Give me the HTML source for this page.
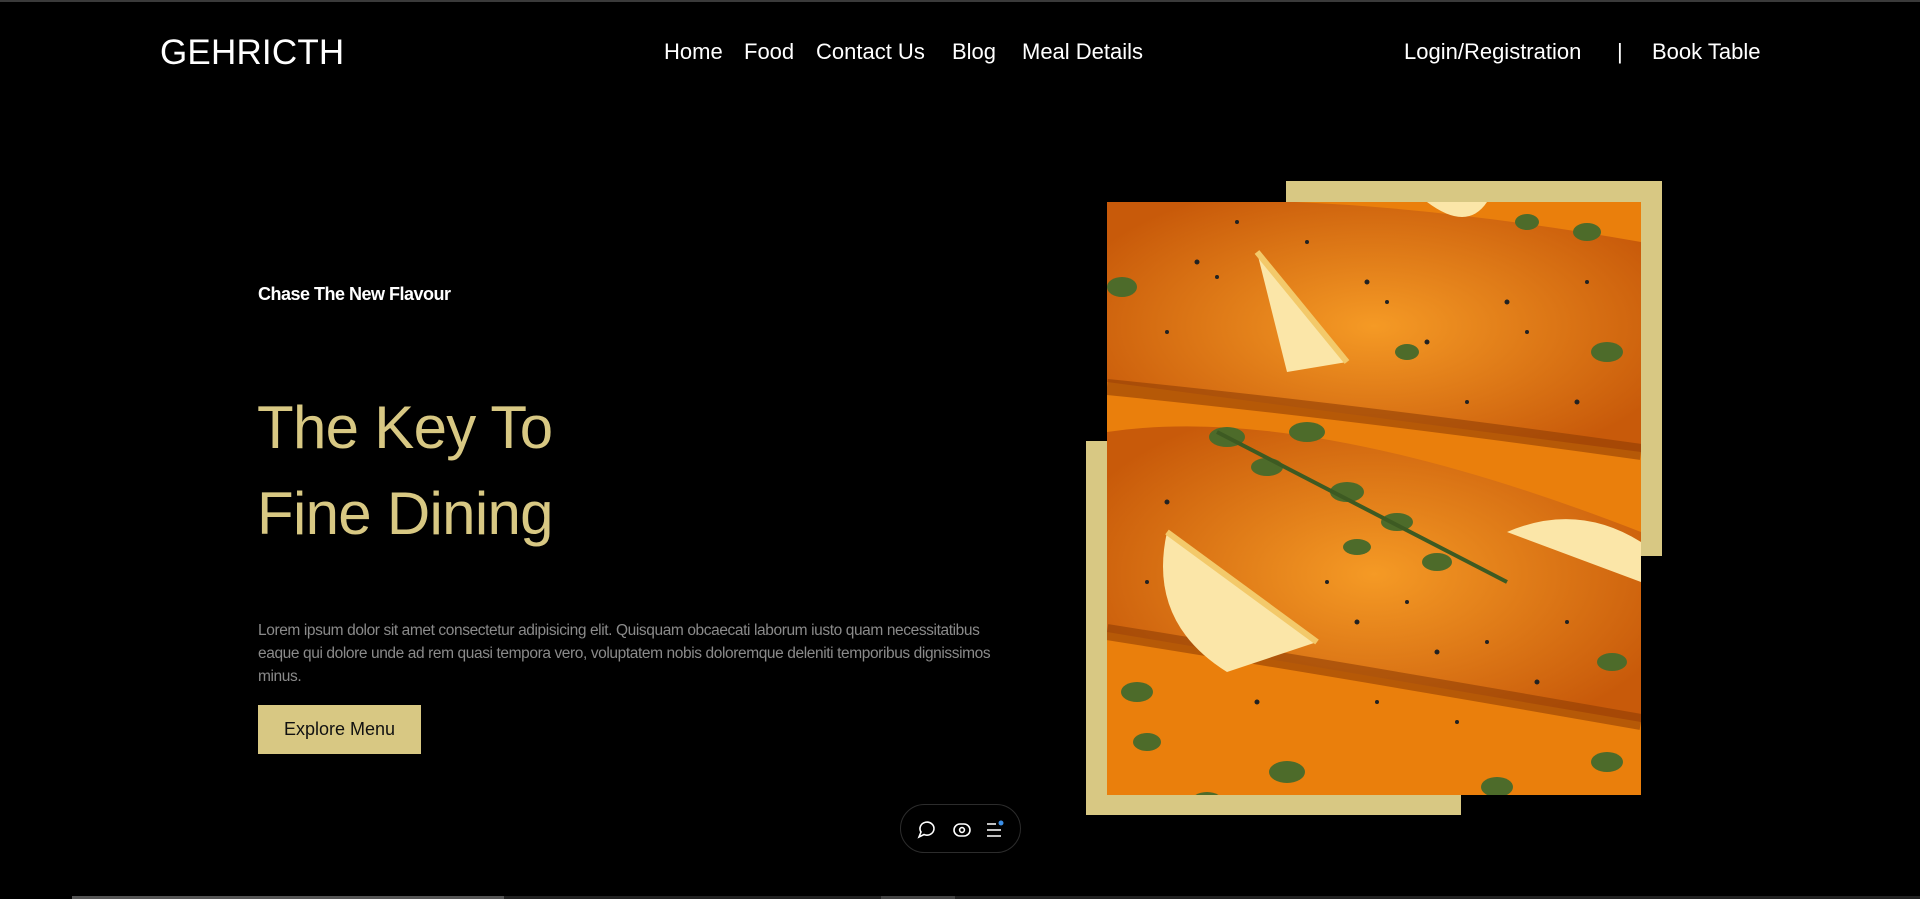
<!DOCTYPE html>
<html><head><meta charset="utf-8">
<style>
*{margin:0;padding:0;box-sizing:border-box}
html,body{width:1920px;height:899px;background:#000;overflow:hidden;font-family:"Liberation Sans",sans-serif;color:#fff}
.top{position:absolute;left:0;top:0;width:1920px;height:2px;background:#3a3a3a}
.logo{position:absolute;left:160px;top:33px;font-size:35px;letter-spacing:0.2px}
.nav{position:absolute;top:39px;font-size:22px;white-space:nowrap}
.nav span{position:absolute;top:0}
.chase{position:absolute;left:258px;top:284px;font-size:18px;font-weight:bold;letter-spacing:-0.5px}
h1{position:absolute;left:257px;top:385px;font-weight:normal;font-size:60px;line-height:86px;color:#d8c883;letter-spacing:-0.7px}
.para{position:absolute;left:258px;top:619px;font-size:15.5px;line-height:23px;color:#8a8a8a;white-space:nowrap;letter-spacing:-0.4px}
.btn{position:absolute;left:258px;top:705px;width:163px;height:49px;background:#d8c883;color:#111;font-size:18px;text-align:center;line-height:49px}
.g1{position:absolute;left:1286px;top:181px;width:376px;height:375px;background:#d8c883}
.g2{position:absolute;left:1086px;top:441px;width:375px;height:374px;background:#d8c883}
.img{position:absolute;left:1107px;top:202px;width:534px;height:593px;overflow:hidden;background:#e8800c}
.pill{position:absolute;left:900px;top:804px;width:121px;height:49px;border:1px solid #2c2c2c;border-radius:25px}
.sb{position:absolute;top:896px;height:3px;background:#444}
</style></head><body>
<div class="top"></div>
<div class="logo">GEHRICTH</div>
<div class="nav">
<span style="left:664px">Home</span>
<span style="left:744px">Food</span>
<span style="left:816px">Contact Us</span>
<span style="left:952px">Blog</span>
<span style="left:1022px">Meal Details</span>
<span style="left:1404px">Login/Registration</span>
<span style="left:1617px">|</span>
<span style="left:1652px">Book Table</span>
</div>
<div class="chase">Chase The New Flavour</div>
<h1>The Key To<br>Fine Dining</h1>
<div class="para">Lorem ipsum dolor sit amet consectetur adipisicing elit. Quisquam obcaecati laborum iusto quam necessitatibus<br>eaque qui dolore unde ad rem quasi tempora vero, voluptatem nobis doloremque deleniti temporibus dignissimos<br>minus.</div>
<div class="btn">Explore Menu</div>
<div class="g1"></div><div class="g2"></div>
<div class="img">
<svg width="534" height="593" viewBox="0 0 534 593">
<defs><radialGradient id="r" cx="50%" cy="50%" r="60%"><stop offset="0" stop-color="#f59a25"/><stop offset="1" stop-color="#c85a0a"/></radialGradient></defs>
<rect width="534" height="593" fill="#ea7f0c"/>
<path d="M40 0 Q250 -10 534 40 L534 250 Q300 220 0 180 L0 0 Z" fill="url(#r)"/>
<path d="M0 230 Q200 200 534 330 L534 520 Q300 480 0 430 Z" fill="url(#r)"/>
<path d="M0 185 Q250 210 534 250" stroke="#8a3a04" stroke-width="16" fill="none" opacity=".55"/>
<path d="M0 430 Q250 470 534 520" stroke="#8a3a04" stroke-width="16" fill="none" opacity=".55"/>
<path d="M150 50 L240 160 L180 170 Z" fill="#fbe6a8"/><path d="M150 50 L240 160" stroke="#f3c96a" stroke-width="6"/>
<path d="M60 330 L210 440 L120 470 Q40 420 60 330 Z" fill="#fbe6a8"/><path d="M60 330 L210 440" stroke="#f3c96a" stroke-width="6"/>
<path d="M400 330 Q470 300 534 340 L534 380 Z" fill="#fbe6a8"/>
<path d="M320 0 Q360 30 380 0 Z" fill="#fbe6a8"/>
<g fill="#4d6b2a">
<ellipse cx="120" cy="235" rx="18" ry="10"/><ellipse cx="160" cy="265" rx="16" ry="9"/><ellipse cx="200" cy="230" rx="18" ry="10"/><ellipse cx="240" cy="290" rx="17" ry="10"/><ellipse cx="290" cy="320" rx="16" ry="9"/><ellipse cx="330" cy="360" rx="15" ry="9"/><ellipse cx="250" cy="345" rx="14" ry="8"/><ellipse cx="500" cy="150" rx="16" ry="10"/><ellipse cx="480" cy="30" rx="14" ry="9"/><ellipse cx="30" cy="490" rx="16" ry="10"/><ellipse cx="180" cy="570" rx="18" ry="11"/><ellipse cx="390" cy="585" rx="16" ry="10"/><ellipse cx="15" cy="85" rx="15" ry="10"/><ellipse cx="505" cy="460" rx="15" ry="9"/><ellipse cx="40" cy="540" rx="14" ry="9"/><ellipse cx="420" cy="20" rx="12" ry="8"/><ellipse cx="300" cy="150" rx="12" ry="8"/><ellipse cx="500" cy="560" rx="16" ry="10"/><ellipse cx="100" cy="600" rx="16" ry="10"/>
</g>
<path d="M110 230 L400 380" stroke="#3d5a22" stroke-width="4"/>
<g fill="#222">
<circle cx="90" cy="60" r="2.5"/><circle cx="110" cy="75" r="2"/><circle cx="260" cy="80" r="2.5"/><circle cx="280" cy="100" r="2"/><circle cx="320" cy="140" r="2.5"/><circle cx="400" cy="100" r="2.5"/><circle cx="420" cy="130" r="2"/><circle cx="60" cy="300" r="2.5"/><circle cx="250" cy="420" r="2.5"/><circle cx="330" cy="450" r="2.5"/><circle cx="430" cy="480" r="2.5"/><circle cx="150" cy="500" r="2.5"/><circle cx="470" cy="200" r="2.5"/><circle cx="360" cy="200" r="2"/><circle cx="60" cy="130" r="2"/><circle cx="220" cy="380" r="2"/><circle cx="300" cy="400" r="2"/><circle cx="380" cy="440" r="2"/><circle cx="460" cy="420" r="2"/><circle cx="40" cy="380" r="2"/><circle cx="350" cy="520" r="2"/><circle cx="270" cy="500" r="2"/><circle cx="480" cy="80" r="2"/><circle cx="200" cy="40" r="2"/><circle cx="130" cy="20" r="2"/>
</g>
</svg>
</div>
<div class="pill">
<svg width="121" height="49" viewBox="0 0 121 49" fill="none" stroke="#fff" stroke-width="1.6">
<path d="M18 32 l2-5 a7 6.5 0 1 1 3 2.5 z"/>
<rect x="53" y="19" width="16" height="12" rx="6"/><circle cx="61" cy="25" r="2.4"/>
<path d="M86 19h9M86 25h14M86 31h14"/>
<circle cx="100" cy="18" r="2.5" fill="#3b8fe8" stroke="none"/>
</svg>
</div>
<div class="sb" style="left:72px;width:432px;background:#555"></div>
<div class="sb" style="left:504px;width:1416px;background:#222"></div>
<div class="sb" style="left:881px;width:74px;background:#444"></div>
</body></html>
